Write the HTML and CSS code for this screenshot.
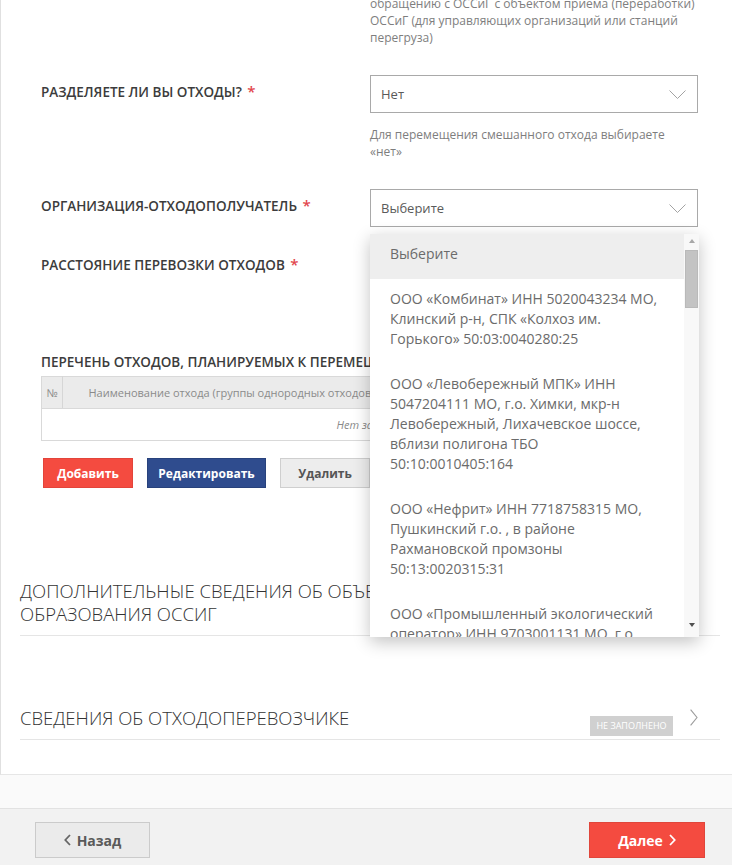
FILE: index.html
```html
<!DOCTYPE html>
<html lang="ru">
<head>
<meta charset="utf-8">
<title>Сведения об отходах</title>
<link rel="stylesheet" href="styles.css">
</head>
<body>
<div class="card">
  <div class="form">
    <div class="row row-tail">
      <div></div>
      <div class="help help-top">обращению с ОССиГ с объектом приема (переработки)<br>ОССиГ (для управляющих организаций или станций<br>перегруза)</div>
    </div>

    <div class="row">
      <div class="label">Разделяете ли вы отходы? <span class="req">*</span></div>
      <div class="control">
        <div class="select"><span>Нет</span><svg class="sel-chev" width="17" height="9" viewBox="0 0 17 9"><polyline points="0.5,0.5 8.5,8.5 16.5,0.5" fill="none" stroke="#a3a3a3" stroke-width="1"/></svg></div>
        <div class="help">Для перемещения смешанного отхода выбираете<br>«нет»</div>
      </div>
    </div>

    <div class="row">
      <div class="label">Организация-отходополучатель <span class="req">*</span></div>
      <div class="control has-menu">
        <div class="select"><span>Выберите</span><svg class="sel-chev" width="17" height="9" viewBox="0 0 17 9"><polyline points="0.5,0.5 8.5,8.5 16.5,0.5" fill="none" stroke="#a3a3a3" stroke-width="1"/></svg></div>
        <div class="menu">
          <div class="menu-list">
            <div class="opt opt-active">Выберите</div>
            <div class="opt">ООО «Комбинат» ИНН 5020043234 МО,<br>Клинский р-н, СПК «Колхоз им.<br>Горького» 50:03:0040280:25</div>
            <div class="opt">ООО «Левобережный МПК» ИНН<br>5047204111 МО, г.о. Химки, мкр-н<br>Левобережный, Лихачевское шоссе,<br>вблизи полигона ТБО<br>50:10:0010405:164</div>
            <div class="opt">ООО «Нефрит» ИНН 7718758315 МО,<br>Пушкинский г.о. , в районе<br>Рахмановской промзоны<br>50:13:0020315:31</div>
            <div class="opt">ООО «Промышленный экологический<br>оператор» ИНН 9703001131 МО, г.о.</div>
          </div>
          <div class="menu-scroll">
            <span class="arrow-up"></span>
            <span class="thumb"></span>
            <span class="arrow-down"></span>
          </div>
        </div>
      </div>
    </div>

    <div class="row row-distance">
      <div class="label">Расстояние перевозки отходов <span class="req">*</span></div>
      <div class="control"><div class="input"></div></div>
    </div>

    <div class="block">
      <div class="label block-title">Перечень отходов, планируемых к перемещению</div>
      <table class="grid">
        <thead>
          <tr>
            <th class="col-num">№</th>
            <th class="col-name">Наименование отхода (группы однородных отходов)</th>
            <th class="col-code"></th>
            <th class="col-mass"></th>
          </tr>
        </thead>
        <tbody>
          <tr><td class="empty" colspan="4">Нет записей</td></tr>
        </tbody>
      </table>
      <div class="actions">
        <button class="btn btn-red btn-add">Добавить</button>
        <button class="btn btn-blue btn-edit">Редактировать</button>
        <button class="btn btn-gray btn-del">Удалить</button>
      </div>
    </div>
  </div>

  <div class="section">
    <div class="section-title">Дополнительные сведения об объекте места<br>образования ОССиГ</div>
  </div>

  <div class="section">
    <div class="section-title">Сведения об отходоперевозчике</div>
    <span class="badge">Не заполнено</span>
    <svg class="sec-chev" width="8" height="17" viewBox="0 0 8 17"><polyline points="0.6,0.6 7,8.5 0.6,16.4" fill="none" stroke="#9c9c9c" stroke-width="1.1"/></svg>
  </div>
</div>

<div class="footer">
  <button class="fbtn fbtn-back"><svg width="7" height="12" viewBox="0 0 7 12"><polyline points="6,1 1.3,6 6,11" fill="none" stroke="#666" stroke-width="1.8"/></svg><span>Назад</span></button>
  <button class="fbtn fbtn-next"><span>Далее</span><svg width="7" height="12" viewBox="0 0 7 12"><polyline points="1,1 5.7,6 1,11" fill="none" stroke="#fff" stroke-width="1.8"/></svg></button>
</div>
</body>
</html>
```

FILE: styles.css
```css
* { box-sizing: border-box; }
html, body { margin: 0; padding: 0; }
body {
  font-family: "Open Sans", "Noto Sans", "DejaVu Sans", sans-serif;
  background: #fafafa;
  color: #3b3b3b;
}

.card {
  background: #fff;
  border-left: 1px solid #e0e0e0;
  border-bottom: 1px solid #e6e6e6;
  padding: 0 12px 34px 19px;
}

.form { padding: 0 22px 21px 21px; }

.row {
  display: grid;
  grid-template-columns: 329px 328px;
  margin-bottom: 21px;
}
.row-tail { margin-top: -5px; }
.row-distance { margin-bottom: 67px; }

.label {
  font-size: 13.5px;
  line-height: 18px;
  padding-top: 7px;
  font-weight: 600;
  text-transform: uppercase;
  color: #3c3c3c;
}
.req {
  color: #e2464d;
  font-size: 15px;
  font-weight: 600;
  margin-left: 2px;
}

.help {
  font-size: 12px;
  line-height: 17px;
  color: #7e7e7e;
  margin: 13px 0 8px;
}
.help-top { margin-top: 0; }

.select, .input {
  height: 38px;
  border: 1px solid #a9a9a9;
  background: #fff;
}
.select {
  display: flex;
  align-items: center;
  justify-content: space-between;
  padding: 0 11px 0 10px;
  font-size: 13px;
  color: #5a5a5a;
}
.sel-chev { display: block; }

.has-menu { position: relative; }
.menu {
  position: absolute;
  left: 0;
  top: calc(100% + 7px);
  width: 329px;
  height: 403px;
  background: #fff;
  box-shadow: 0 5px 16px rgba(0, 0, 0, 0.24);
  display: flex;
  z-index: 10;
}
.menu-list { flex: 1; overflow: hidden; }
.opt {
  padding: 10px 20px 15px;
  font-size: 14px;
  line-height: 20px;
  color: #6b6b6b;
  white-space: nowrap;
}
.opt-active { background: #eeeeee; }

.menu-scroll {
  width: 15px;
  background: #f8f8f8;
  display: flex;
  flex-direction: column;
  align-items: center;
  padding: 5px 0 10px;
}
.arrow-up {
  width: 0; height: 0;
  border-left: 3px solid transparent;
  border-right: 3px solid transparent;
  border-bottom: 4px solid #a8a8a8;
  margin-bottom: 7px;
}
.thumb {
  width: 13px;
  height: 58px;
  background: #c3c3c3;
  border: 1px solid #b9b9b9;
}
.arrow-down {
  margin-top: auto;
  width: 0; height: 0;
  border-left: 3px solid transparent;
  border-right: 3px solid transparent;
  border-top: 4px solid #505050;
}

.block-title { padding-top: 0; margin-bottom: 5px; }

.grid {
  width: 100%;
  border-collapse: collapse;
  table-layout: fixed;
  border: 1px solid #d9d9d9;
  font-size: 11px;
}
.grid th {
  background: #ebebeb;
  height: 32px;
  font-weight: 400;
  color: #8a8a8a;
  padding: 0 6px;
  white-space: nowrap;
  overflow: hidden;
  border-bottom: 1px solid #d9d9d9;
  border-right: 1px solid #d6d6d6;
}
.grid .col-num { width: 21px; padding: 0; text-align: center; }
.grid .col-name { width: 338px; text-align: center; }
.grid .col-code { width: 150px; }
.grid .empty {
  height: 32px;
  text-align: center;
  font-style: italic;
  color: #8a8a8a;
}

.actions {
  display: flex;
  gap: 14px;
  margin-top: 17px;
  padding-left: 2px;
}
.btn {
  height: 30px;
  border: 1px solid;
  font-family: "Open Sans", "Noto Sans", sans-serif;
  font-size: 12px;
  font-weight: 700;
  color: #fff;
  padding: 0;
  text-align: center;
}
.btn-add { width: 90px; }
.btn-edit { width: 119px; }
.btn-del { width: 90px; }
.btn-red { background: #f44b40; border-color: #e3443a; }
.btn-blue { background: #2f4c8e; border-color: #28427c; }
.btn-gray { background: #ededed; border-color: #cfcfcf; color: #555; }

.section {
  display: flex;
  align-items: flex-start;
  padding: 70px 22px 10px 0;
  border-bottom: 1px solid #e5e5e5;
}
.section-title {
  flex: 1;
  font-size: 18.5px;
  line-height: 23px;
  font-weight: 300;
  color: #333;
  text-transform: uppercase;
}
.badge {
  margin-top: 10px;
  margin-bottom: -7px;
  margin-right: 17px;
  width: 83px;
  height: 20px;
  background: #d0d0d0;
  color: #fff;
  font-size: 9px;
  line-height: 20px;
  text-align: center;
  text-transform: uppercase;
  white-space: nowrap;
}
.sec-chev { margin-top: 3px; display: block; }

.footer {
  margin-top: 33px;
  border-top: 1px solid #e2e2e2;
  background: #f2f2f2;
  padding: 13px 27px 20px 35px;
  display: flex;
  justify-content: space-between;
}
.fbtn {
  height: 36px;
  width: 115px;
  display: flex;
  align-items: center;
  justify-content: center;
  gap: 6px;
  font-family: "Open Sans", "Noto Sans", sans-serif;
  font-size: 14px;
  font-weight: 700;
  padding: 0;
}
.fbtn-back { background: #ebebeb; border: 1px solid #cbcbcb; color: #5a5a5a; }
.fbtn-next { width: 116px; background: #f44b40; border: 1px solid #e0463b; color: #fff; }
```
